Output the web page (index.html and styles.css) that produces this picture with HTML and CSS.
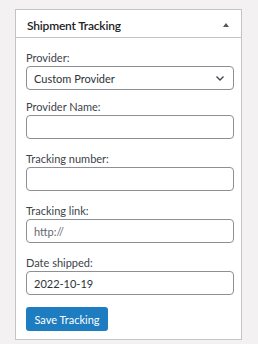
FILE: index.html
```html
<!DOCTYPE html>
<html lang="en">
<head>
  <meta charset="UTF-8">
  <meta name="viewport" content="width=device-width, initial-scale=1.0">
  <title>Shipment Tracking</title>
  <link rel="stylesheet" href="styles.css">
</head>
<body>
  <div class="box">
    <div class="box-head">
      <h2>Shipment Tracking</h2>
      <span class="toggle"></span>
    </div>
    <form class="box-body" id="trackingForm">
      <div class="field field-select">
        <label for="provider">Provider:</label>
        <div class="select-wrap">
          <select id="provider">
            <option>Custom Provider</option>
          </select>
          <svg class="chevron" width="12" height="8" viewBox="0 0 12 8"><path d="M2.5 2.5l3.5 3.5 3.5-3.5" fill="none" stroke="#3c434a" stroke-width="1.3"/></svg>
        </div>
      </div>

      <div class="field">
        <label for="providerName">Provider Name:</label>
        <input type="text" id="providerName">
      </div>

      <div class="field">
        <label for="trackingNumber">Tracking number:</label>
        <input type="text" id="trackingNumber">
      </div>

      <div class="field">
        <label for="trackingLink">Tracking link:</label>
        <input type="text" id="trackingLink" placeholder="http://">
      </div>

      <div class="field">
        <label for="dateShipped">Date shipped:</label>
        <input type="text" id="dateShipped" value="2022-10-19">
      </div>

      <button type="submit">Save Tracking</button>
    </form>
  </div>
</body>
</html>
```

FILE: styles.css
```css
body {
    font-family: Lato, "Noto Sans", sans-serif;
    background-color: #f3f1f2;
    color: #1d2327;
    margin: 0;
}

.box {
    width: 227px;
    margin: 9px 0 0 15px;
    box-sizing: border-box;
    background-color: #fff;
    border: 1px solid #c3c4c7;
}

.box-head {
    height: 28px;
    display: flex;
    align-items: center;
    justify-content: space-between;
    padding: 3px 12px 0 11px;
    box-sizing: border-box;
    border-bottom: 1px solid #c3c4c7;
}

.box-head h2 {
    margin: 0;
    font-size: 12px;
    font-weight: 600;
    letter-spacing: -0.2px;
    color: #1d2327;
}

.toggle {
    width: 0;
    height: 0;
    border-left: 3px solid transparent;
    border-right: 3px solid transparent;
    border-bottom: 4px solid #50575e;
}

.box-body {
    padding: 12px 7px 8px 10px;
}

.field {
    margin-bottom: 12px;
}

.field-select {
    margin-bottom: 9px;
}

label {
    display: block;
    font-size: 11px;
    line-height: 16px;
    color: #3c434a;
}

input,
select {
    display: block;
    width: 100%;
    height: 24px;
    box-sizing: border-box;
    margin: 0;
    padding: 0 7px;
    border: 1px solid #8c8f94;
    border-radius: 4px;
    background-color: #fff;
    font-family: inherit;
    font-size: 11px;
    color: #2c3338;
}

input::placeholder {
    color: #646970;
}

.select-wrap {
    position: relative;
}

select {
    appearance: none;
    -webkit-appearance: none;
}

.chevron {
    position: absolute;
    right: 8px;
    top: 8px;
    pointer-events: none;
}

button {
    display: block;
    height: 24px;
    width: 82px;
    padding: 0;
    border: none;
    border-radius: 3px;
    background-color: #1e7cc0;
    color: #fff;
    font-family: inherit;
    font-size: 11px;
    cursor: pointer;
}
```
